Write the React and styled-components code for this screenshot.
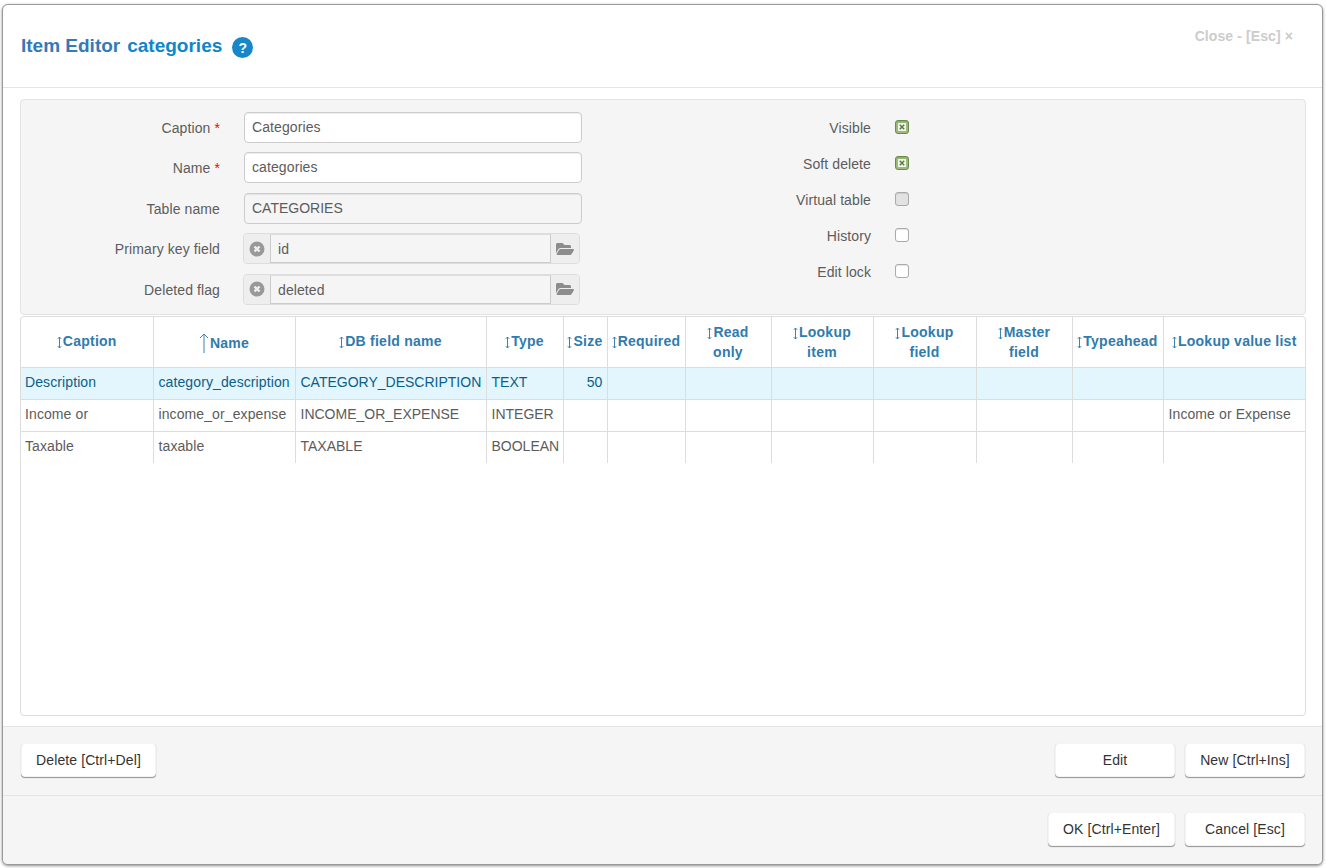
import React from "react";
import styled, { createGlobalStyle } from "styled-components";
import { FaFolderOpen } from "react-icons/fa";

const Global = createGlobalStyle`
  html, body { margin: 0; padding: 0; height: 100%; background: #fff; }
  body { font-family: "Liberation Sans", Arial, sans-serif; font-size: 14px; color: #5c5c5c; overflow: hidden; letter-spacing: .1px; }
  * { box-sizing: border-box; }
`;

const Page = styled.div`
  width: 1326px;
  height: 868px;
  padding: 4px 2px 2px 2px;
`;
const Modal = styled.div`
  width: 1321px;
  height: 861px;
  background: #fff;
  border: 1px solid #999;
  border-radius: 6px;
  box-shadow: 0 1px 3px rgba(0,0,0,.45);
  display: flex;
  flex-direction: column;
  overflow: hidden;
`;
const Header = styled.div`
  height: 83px;
  flex: none;
  border-bottom: 1px solid #e5e5e5;
  padding: 0 29px 0 18px;
  display: flex;
  justify-content: space-between;
`;
const TitleBox = styled.div`
  display: flex;
  align-items: center;
  gap: 10px;
  height: 82px;
`;
const Title = styled.h3`
  margin: 0;
  font-size: 19px;
  font-weight: bold;
  line-height: 24px;
  color: #337ab7;
  display: flex;
  gap: 7px;
  letter-spacing: 0;
`;
const TitleName = styled.span`
  color: #0e86c9;
`;
const Help = styled.span`
  width: 21px;
  height: 21px;
  border-radius: 50%;
  background: #1688ca;
  color: #fff;
  font-weight: bold;
  font-size: 14px;
  display: flex;
  align-items: center;
  justify-content: center;
  margin-top: 3px;
`;
const Close = styled.div`
  margin-top: 23px;
  height: 16px;
  font-size: 14px;
  font-weight: bold;
  line-height: 16px;
  color: #ccc;
`;
const Body = styled.div`
  flex: 1;
  padding: 11px 16px 10px 17px;
  display: flex;
  flex-direction: column;
  gap: 1px;
  min-height: 0;
`;
const InfoPanel = styled.div`
  height: 216px;
  flex: none;
  background: #f5f5f5;
  border: 1px solid #e3e3e3;
  border-radius: 4px;
  display: flex;
  padding-top: 9px;
`;
const LeftCol = styled.div`
  width: 761px;
  padding-top: 2.75px;
  display: flex;
  flex-direction: column;
  gap: 9.5px;
  flex: none;
`;
const RightCol = styled.div`
  flex: 1;
  display: flex;
  flex-direction: column;
`;
const FieldRow = styled.div`
  display: flex;
  align-items: center;
  height: 31px;
`;
const FieldLabel = styled.label`
  width: 199px;
  text-align: right;
  flex: none;
  padding-top: 1px;
`;
const Req = styled.span`
  color: #f00;
  margin-left: 4px;
`;
const Input = styled.div`
  width: 338px;
  height: 31px;
  margin-left: 24px;
  border: 1px solid #ccc;
  border-radius: 4px;
  background: ${(p) => (p.$disabled ? "#f5f5f5" : "#fff")};
  box-shadow: inset 0 1px 1px rgba(0,0,0,.075);
  padding: 0 7px;
  line-height: 29px;
  letter-spacing: ${(p) => (p.$disabled ? "0" : ".1px")};
`;
const InputGroup = styled.div`
  width: 337px;
  height: 31px;
  margin-left: 23px;
  border: 1px solid #ddd;
  border-radius: 4px;
  display: flex;
  background: #eee;
  overflow: hidden;
`;
const AddOn = styled.span`
  width: ${(p) => p.$w}px;
  flex: none;
  display: flex;
  align-items: center;
  justify-content: center;
  color: #8c8c8c;
  background: #eee;
`;
const GroupValue = styled.div`
  flex: 1;
  background: #f5f5f5;
  border-left: 1px solid #ccc;
  border-right: 1px solid #ccc;
  border-top: 1px solid #ddd;
  border-bottom: 1px solid #ccc;
  padding: 0 7px;
  line-height: 29px;
`;
const CheckRow = styled.div`
  display: flex;
  align-items: center;
  height: 36px;
`;
const CheckLabel = styled.label`
  width: 89px;
  text-align: right;
  flex: none;
  padding-top: 1px;
`;
const Check = styled.span`
  width: 14px;
  height: 14px;
  margin-left: 24px;
  flex: none;
  border-radius: 3px;
  border: 1px solid ${(p) => (p.$checked ? "#6b8a50" : "#aaa")};
  background: ${(p) => (p.$checked ? "#9dbb78" : p.$disabled ? "#e2e2e2" : "#fff")};
  box-shadow: inset 0 1px 1px rgba(0,0,0,.1);
  display: flex;
  align-items: center;
  justify-content: center;
`;
const CheckMark = styled.span`
  width: 8px;
  height: 8px;
  background: #f4f4ec;
  display: flex;
  align-items: center;
  justify-content: center;
`;
const TableWrap = styled.div`
  flex: 1;
  border: 1px solid #ddd;
  border-radius: 4px;
  overflow: hidden;
  min-height: 0;
`;
const Table = styled.table`
  border-collapse: collapse;
  table-layout: fixed;
  width: 1284px;
`;
const Th = styled.th`
  height: 50px;
  padding: ${(p) => (p.$active ? "3px 0 0" : p.$two ? "1px 0 0" : "0 0 1px")};
  font-size: 14px;
  line-height: 20px;
  font-weight: bold;
  letter-spacing: .25px;
  white-space: nowrap;
  text-align: center;
  color: #2f7bae;
  border-left: 1px solid #ddd;
  border-bottom: 1px solid #ddd;
  &:first-child { border-left: 0; }
`;
const SortSvg = styled.svg`
  vertical-align: ${(p) => (p.$active ? "-5px" : "-3px")};
  margin-right: 1px;
  fill: none;
  stroke: #3a84b5;
  stroke-width: 1;
`;
const Tr = styled.tr`
  background: ${(p) => (p.$selected ? "#e3f5fd" : "#fff")};
  color: ${(p) => (p.$selected ? "#0a5f8a" : "#5c5c5c")};
`;
const Td = styled.td`
  height: 32px;
  padding: 0 4px 2px 5px;
  font-size: 14px;
  white-space: nowrap;
  overflow: hidden;
  letter-spacing: ${(p) => (p.$caps ? "0" : ".1px")};
  text-align: ${(p) => (p.$num ? "right" : "left")};
  border-left: 1px solid #ddd;
  border-bottom: 1px solid ${(p) => (p.$last ? "transparent" : "#ddd")};
  &:first-child { border-left: 0; padding-left: 4px; }
`;
const Footer = styled.div`
  height: 69px;
  flex: none;
  background: #f5f5f5;
  border-top: 1px solid #e5e5e5;
  padding: 16px 17px 0 18px;
  display: flex;
  justify-content: space-between;
  align-items: flex-start;
`;
const Footer2 = styled(Footer)`
  justify-content: flex-end;
`;
const BtnGroup = styled.div`
  display: flex;
  gap: 10px;
`;
const Button = styled.button`
  width: ${(p) => p.$w}px;
  height: 34px;
  padding: 0;
  font: 14px "Liberation Sans", Arial, sans-serif;
  letter-spacing: .1px;
  color: #333;
  background: #fff;
  border: 1px solid #f4f4f4;
  border-radius: 4px;
  box-shadow: 0 1px 1px rgba(0,0,0,.4);
`;

const cols = [132, 142, 191, 77, 44, 78, 86, 102, 103, 96, 91, 142];
const heads = [
  ["Caption"], ["Name", true], ["DB field name"], ["Type"], ["Size"], ["Required"],
  ["Read", "only"], ["Lookup", "item"], ["Lookup", "field"], ["Master", "field"], ["Typeahead"], ["Lookup value list"],
];
const rows = [
  ["Description", "category_description", "CATEGORY_DESCRIPTION", "TEXT", "50", "", "", "", "", "", "", ""],
  ["Income or", "income_or_expense", "INCOME_OR_EXPENSE", "INTEGER", "", "", "", "", "", "", "", "Income or Expense"],
  ["Taxable", "taxable", "TAXABLE", "BOOLEAN", "", "", "", "", "", "", "", ""],
];
const checks = [
  ["Visible", true], ["Soft delete", true], ["Virtual table", false, true], ["History"], ["Edit lock"],
];

const Clear = () => (
  <AddOn $w={26}>
    <svg width="16" height="16" viewBox="0 0 16 16">
      <circle cx="8" cy="8" r="7.5" fill="#999" />
      <path d="M5.5 5.5l5 5M10.5 5.5l-5 5" stroke="#eee" strokeWidth="2.4" />
    </svg>
  </AddOn>
);
const Browse = () => (
  <AddOn $w={28}><FaFolderOpen size={18} /></AddOn>
);
const SortArrows = () => (
  <SortSvg width="5" height="13" viewBox="0 0 5 13">
    <path d="M2.5 1v11M.8 2.8l1.7-1.8 1.7 1.8M.8 10.2l1.7 1.8 1.7-1.8" />
  </SortSvg>
);
const SortUp = () => (
  <SortSvg $active width="10" height="20" viewBox="0 0 10 20">
    <path d="M5 1v19M1 5l4-4 4 4" />
  </SortSvg>
);

export default function App() {
  return (
    <Page>
      <Global />
      <Modal>
        <Header>
          <TitleBox>
            <Title>Item Editor <TitleName>categories</TitleName></Title>
            <Help>?</Help>
          </TitleBox>
          <Close>Close - [Esc] ×</Close>
        </Header>
        <Body>
          <InfoPanel>
            <LeftCol>
              <FieldRow><FieldLabel>Caption<Req>*</Req></FieldLabel><Input>Categories</Input></FieldRow>
              <FieldRow><FieldLabel>Name<Req>*</Req></FieldLabel><Input>categories</Input></FieldRow>
              <FieldRow><FieldLabel>Table name</FieldLabel><Input $disabled>CATEGORIES</Input></FieldRow>
              <FieldRow><FieldLabel>Primary key field</FieldLabel><InputGroup><Clear /><GroupValue>id</GroupValue><Browse /></InputGroup></FieldRow>
              <FieldRow><FieldLabel>Deleted flag</FieldLabel><InputGroup><Clear /><GroupValue>deleted</GroupValue><Browse /></InputGroup></FieldRow>
            </LeftCol>
            <RightCol>
              {checks.map(([label, on, dis]) => (
                <CheckRow key={label}>
                  <CheckLabel>{label}</CheckLabel>
                  <Check $checked={on} $disabled={dis}>
                    {on && (
                      <CheckMark>
                        <svg width="6" height="6" viewBox="0 0 6 6">
                          <path d="M.8.8l4.4 4.4M5.2.8L.8 5.2" stroke="#5d7a45" strokeWidth="1.5" />
                        </svg>
                      </CheckMark>
                    )}
                  </Check>
                </CheckRow>
              ))}
            </RightCol>
          </InfoPanel>
          <TableWrap>
            <Table>
              <colgroup>{cols.map((w, i) => <col key={i} style={{ width: w }} />)}</colgroup>
              <thead>
                <tr>
                  {heads.map(([h, second], i) => (
                    <Th key={i} $active={second === true} $two={typeof second === "string"}>
                      {second === true ? <SortUp /> : <SortArrows />}{h}
                      {typeof second === "string" && <><br />{second}</>}
                    </Th>
                  ))}
                </tr>
              </thead>
              <tbody>
                {rows.map((r, i) => (
                  <Tr key={i} $selected={i === 0}>
                    {r.map((c, j) => <Td key={j} $num={j === 4} $caps={j === 2 || j === 3} $last={i === 2}>{c}</Td>)}
                  </Tr>
                ))}
              </tbody>
            </Table>
          </TableWrap>
        </Body>
        <Footer>
          <Button $w={135}>Delete [Ctrl+Del]</Button>
          <BtnGroup>
            <Button $w={120}>Edit</Button>
            <Button $w={120}>New [Ctrl+Ins]</Button>
          </BtnGroup>
        </Footer>
        <Footer2>
          <BtnGroup>
            <Button $w={127}>OK [Ctrl+Enter]</Button>
            <Button $w={120}>Cancel [Esc]</Button>
          </BtnGroup>
        </Footer2>
      </Modal>
    </Page>
  );
}
